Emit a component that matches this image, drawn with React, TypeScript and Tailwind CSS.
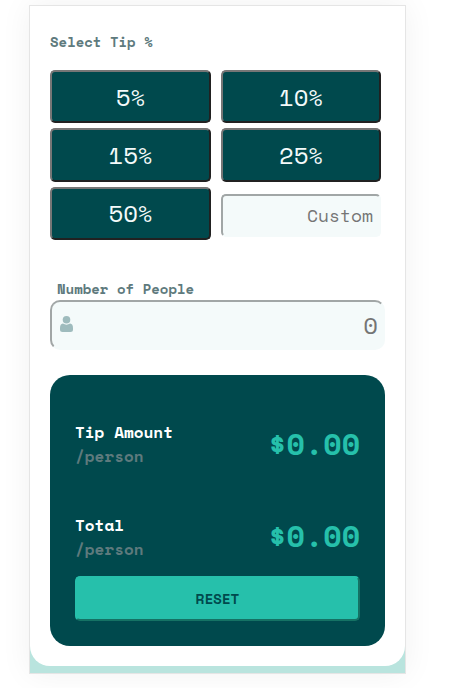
const mono = "font-['Space_Mono','Liberation_Mono',monospace]";

const tipButton =
  'h-[53px] rounded-[5px] border-2 border-t-[#767676] border-l-[#767676] border-r-[#212121] border-b-[#212121] bg-[#00494d] text-center text-[24px] text-[#f4fafa]';

function Result({ label, amountClass }: { label: string; amountClass: string }) {
  return (
    <div className="flex h-[48px] items-start justify-between">
      <div className="text-[16px] leading-[24px] font-bold">
        <p className="text-white">{label}</p>
        <p className="text-[#5e7a7d]">/person</p>
      </div>
      <p className={`text-[30px] leading-[44px] font-bold text-[#26c0ab] ${amountClass}`}>$0.00</p>
    </div>
  );
}

export default function App() {
  return (
    <div className={`h-[688px] w-[455px] overflow-hidden bg-white pt-[5px] pl-[29px] ${mono}`}>
      <main className="h-[669px] w-[377px] border border-[#e5e5e5] bg-[#b9e4de] shadow-[0_0_30px_rgba(0,0,0,0.06)]">
        <div className="h-[660px] rounded-b-[20px] bg-white px-[20px] pt-[25px]">
          <h2 className="h-[39px] text-[14px] leading-[21px] font-bold text-[#5e7a7d]">Select Tip %</h2>
          <div className="grid h-[170px] grid-cols-[161px_160px] grid-rows-[53px_54px_53px] gap-x-[10px] gap-y-[5px]">
            <button className={`${tipButton} leading-[51px]`}>5%</button>
            <button className={`${tipButton} leading-[51px]`}>10%</button>
            <button className={`${tipButton} h-[54px] leading-[49px]`}>15%</button>
            <button className={`${tipButton} h-[54px] leading-[49px]`}>25%</button>
            <button className={`${tipButton} leading-[49px]`}>50%</button>
            <input
              aria-label="Custom tip"
              placeholder="Custom"
              className="mt-[7px] h-[43px] w-[160px] rounded-[5px] border-2 border-t-[#a1a6a6] border-l-[#a1a6a6] border-r-[#f4fafa] border-b-[#f4fafa] bg-[#f4fafa] px-[6px] pb-[2px] text-right text-[18px] placeholder:text-[#757575]"
            />
          </div>
          <label className="mt-[38px] block h-[22px] pl-[7px] text-[14px] leading-[21px] font-bold text-[#5e7a7d]" htmlFor="people">
            Number of People
          </label>
          <div className="flex h-[50px] items-center rounded-[10px] border-2 border-t-[#a1a6a6] border-l-[#a1a6a6] border-r-[#f4fafa] border-b-[#f4fafa] bg-[#f4fafa] px-[5px]">
            <svg className="mb-[2px] ml-[3px] h-[16px] w-[13px] shrink-0" viewBox="0 0 13 16" fill="#9ebbbd">
              <circle cx="6.5" cy="3.8" r="3.8" />
              <path d="M2.9 7.6Q6.5 9.8 10.1 7.6Q13 8 13 12V13.5Q13 16 10.5 16H2.5Q0 16 0 13.5V12Q0 8 2.9 7.6Z" />
            </svg>
            <input
              id="people"
              placeholder="0"
              className="min-w-0 flex-1 bg-transparent text-right text-[24px] placeholder:text-[#757575]"
            />
          </div>
          <section className="mt-[25px] h-[271px] rounded-[20px] bg-[#00494d] px-[25px] pt-[45px]">
            <Result label="Tip Amount" amountClass="pt-[2px]" />
            <div className="mt-[45px]">
              <Result label="Total" amountClass="pt-[1px]" />
            </div>
            <button className="mt-[15px] block h-[45px] w-[285px] rounded-[5px] border-2 border-t-[#26c0ab] border-l-[#26c0ab] border-r-[#157264] border-b-[#157264] bg-[#26c0ab] font-['Space_Grotesk','Space_Mono',sans-serif] pt-[2px] text-[14px] font-semibold tracking-[0.6px] text-[#00494d]">
              RESET
            </button>
          </section>
        </div>
      </main>
    </div>
  );
}
